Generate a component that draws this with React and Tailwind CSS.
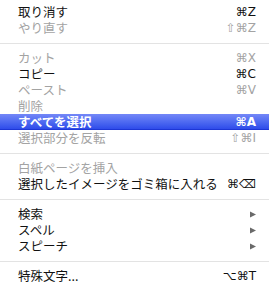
import React from "react";

const FONT = { fontFamily: '"Noto Sans CJK JP", "Noto Sans", sans-serif' };
const SYM = { fontFamily: '"DejaVu Sans", "Noto Sans CJK JP", sans-serif' };

function Row({ label, shortcut, disabled, active, submenu }) {
  const base = active
    ? "bg-gradient-to-b from-[#7487f7] to-[#2f4bea] border-b border-[#1d36d6] text-white"
    : disabled
    ? "text-[#a3a3a3]"
    : "text-[#111]";
  return (
    <div className={`flex h-[16px] items-center justify-between pl-[18px] pr-[13px] ${base}`}>
      <span className={`text-[12.5px] leading-[16px] ${active ? "font-semibold" : ""}`} style={FONT}>
        {label}
      </span>
      {shortcut && (
        <span className={`text-[12px] leading-[16px] ${active ? "font-bold" : ""}`} style={SYM}>
          {shortcut}
        </span>
      )}
      {submenu && (
        <svg width="6" height="7" viewBox="0 0 6 7">
          <path d="M0 0.5 L6 3.5 L0 6.5 Z" fill="#6a6a6a" />
        </svg>
      )}
    </div>
  );
}

function Sep() {
  return (
    <div className="flex h-[14px] items-center">
      <div className="h-px w-full bg-[#e3e3e3]" />
    </div>
  );
}

export default function App() {
  return (
    <div className="w-[269px] h-[288px] bg-white pt-[4px] overflow-hidden">
      <Row label="取り消す" shortcut="⌘Z" />
      <Row label="やり直す" shortcut="⇧⌘Z" disabled />
      <Sep />
      <Row label="カット" shortcut="⌘X" disabled />
      <Row label="コピー" shortcut="⌘C" />
      <Row label="ペースト" shortcut="⌘V" disabled />
      <Row label="削除" disabled />
      <Row label="すべてを選択" shortcut="⌘A" active />
      <Row label="選択部分を反転" shortcut="⇧⌘I" disabled />
      <Sep />
      <Row label="白紙ページを挿入" disabled />
      <Row label="選択したイメージをゴミ箱に入れる" shortcut="⌘⌫" />
      <Sep />
      <Row label="検索" submenu />
      <Row label="スペル" submenu />
      <Row label="スピーチ" submenu />
      <Sep />
      <Row label="特殊文字..." shortcut="⌥⌘T" />
    </div>
  );
}
